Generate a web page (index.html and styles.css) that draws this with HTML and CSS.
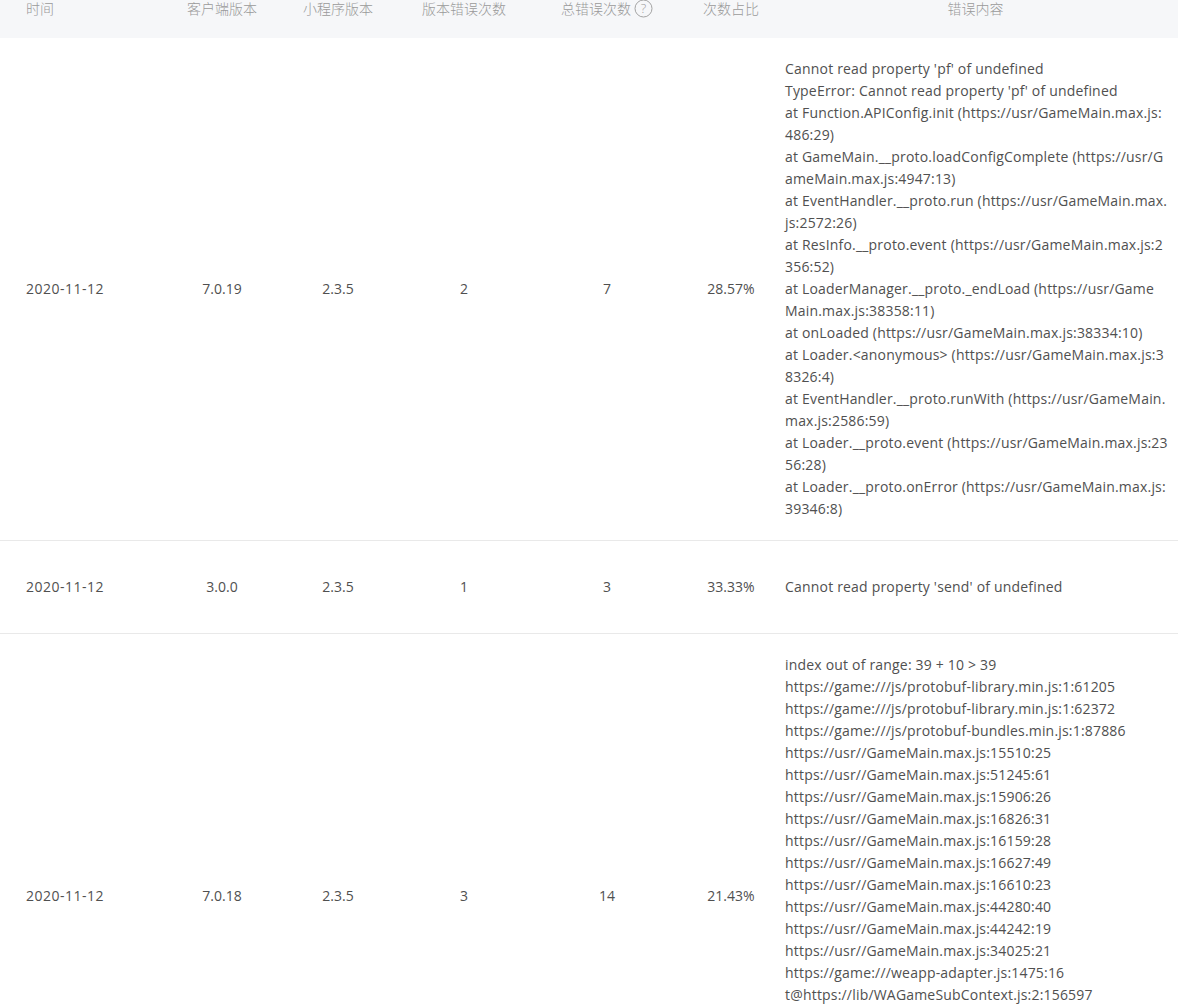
FILE: index.html
```html
<!DOCTYPE html>
<html lang="zh-CN">
<head>
<meta charset="utf-8">
<title>错误列表</title>
<link rel="stylesheet" href="styles.css">
</head>
<body>
<table class="errors">
<colgroup>
<col class="c-time"><col class="c-client"><col class="c-mini"><col class="c-ver"><col class="c-total"><col class="c-ratio"><col class="c-msg">
</colgroup>
<thead>
<tr>
<th class="left">时间</th>
<th>客户端版本</th>
<th>小程序版本</th>
<th>版本错误次数</th>
<th><span class="th-help">总错误次数<svg class="help" width="19" height="19" viewBox="0 0 19 19" aria-hidden="true"><circle cx="9.5" cy="9.5" r="8.5" fill="none" stroke="#a3a3a3" stroke-width="1"/><text x="9.5" y="14" text-anchor="middle" class="help-q">?</text></svg></span></th>
<th>次数占比</th>
<th>错误内容</th>
</tr>
</thead>
<tbody>
<tr>
<td class="left">2020-11-12</td><td>7.0.19</td><td>2.3.5</td><td>2</td><td>7</td><td>28.57%</td>
<td class="msg">Cannot read property 'pf' of undefined<br>TypeError: Cannot read property 'pf' of undefined<br>at Function.APIConfig.init (https://usr/GameMain.max.js:<br>486:29)<br>at GameMain.__proto.loadConfigComplete (https://usr/G<br>ameMain.max.js:4947:13)<br>at EventHandler.__proto.run (https://usr/GameMain.max.<br>js:2572:26)<br>at ResInfo.__proto.event (https://usr/GameMain.max.js:2<br>356:52)<br>at LoaderManager.__proto._endLoad (https://usr/Game<br>Main.max.js:38358:11)<br>at onLoaded (https://usr/GameMain.max.js:38334:10)<br>at Loader.&lt;anonymous&gt; (https://usr/GameMain.max.js:3<br>8326:4)<br>at EventHandler.__proto.runWith (https://usr/GameMain.<br>max.js:2586:59)<br>at Loader.__proto.event (https://usr/GameMain.max.js:23<br>56:28)<br>at Loader.__proto.onError (https://usr/GameMain.max.js:<br>39346:8)</td>
</tr>
<tr class="short">
<td class="left">2020-11-12</td><td>3.0.0</td><td>2.3.5</td><td>1</td><td>3</td><td>33.33%</td>
<td class="msg">Cannot read property 'send' of undefined</td>
</tr>
<tr class="tall">
<td class="left">2020-11-12</td><td>7.0.18</td><td>2.3.5</td><td>3</td><td>14</td><td>21.43%</td>
<td class="msg">index out of range: 39 + 10 &gt; 39<br>https://game:///js/protobuf-library.min.js:1:61205<br>https://game:///js/protobuf-library.min.js:1:62372<br>https://game:///js/protobuf-bundles.min.js:1:87886<br>https://usr//GameMain.max.js:15510:25<br>https://usr//GameMain.max.js:51245:61<br>https://usr//GameMain.max.js:15906:26<br>https://usr//GameMain.max.js:16826:31<br>https://usr//GameMain.max.js:16159:28<br>https://usr//GameMain.max.js:16627:49<br>https://usr//GameMain.max.js:16610:23<br>https://usr//GameMain.max.js:44280:40<br>https://usr//GameMain.max.js:44242:19<br>https://usr//GameMain.max.js:34025:21<br>https://game:///weapp-adapter.js:1475:16<br>t@https://lib/WAGameSubContext.js:2:156597</td>
</tr>
</tbody>
</table>
</body>
</html>
```
FILE: styles.css
```css
html, body {
  margin: 0;
  padding: 0;
  height: 1008px;
  overflow: hidden;
  background: #fff;
}
body {
  font-family: "Open Sans", "Noto Sans CJK SC", sans-serif;
  font-size: 14px;
  line-height: 22px;
  color: #505050;
}
.errors {
  width: 1178px;
  table-layout: fixed;
  border-collapse: separate;
  border-spacing: 0;
}
.c-time { width: 171px; }
.c-client { width: 102px; }
.c-mini { width: 130px; }
.c-ver { width: 122px; }
.c-total { width: 164px; }
.c-ratio { width: 84px; }
.c-msg { width: 405px; }
th {
  height: 38px;
  padding: 0;
  box-sizing: border-box;
  background: #f6f7f9;
  font-family: "Noto Sans CJK SC", sans-serif;
  font-weight: 300;
  line-height: 16px;
  color: #9a9a9a;
  text-align: center;
  vertical-align: top;
}
td {
  padding: 20px 12px;
  text-align: center;
  vertical-align: middle;
  border-bottom: 1px solid #e9e9e9;
}
th.left, td.left {
  padding-left: 26px;
  text-align: left;
}
td.left {
  padding-right: 0;
  letter-spacing: 0.5px;
}
.msg {
  text-align: left;
  white-space: nowrap;
  letter-spacing: 0.19px;
}
.short td { padding-top: 35px; padding-bottom: 35px; }
.tall td { height: 524px; box-sizing: border-box; }
.tall .msg { vertical-align: top; }
.th-help {
  display: inline-flex;
  align-items: flex-start;
  gap: 3px;
  height: 16px;
}
.help { flex: none; margin-top: -1px; }
.help-q {
  font-family: "Open Sans", sans-serif;
  font-size: 13px;
  fill: #9a9a9a;
}
```
